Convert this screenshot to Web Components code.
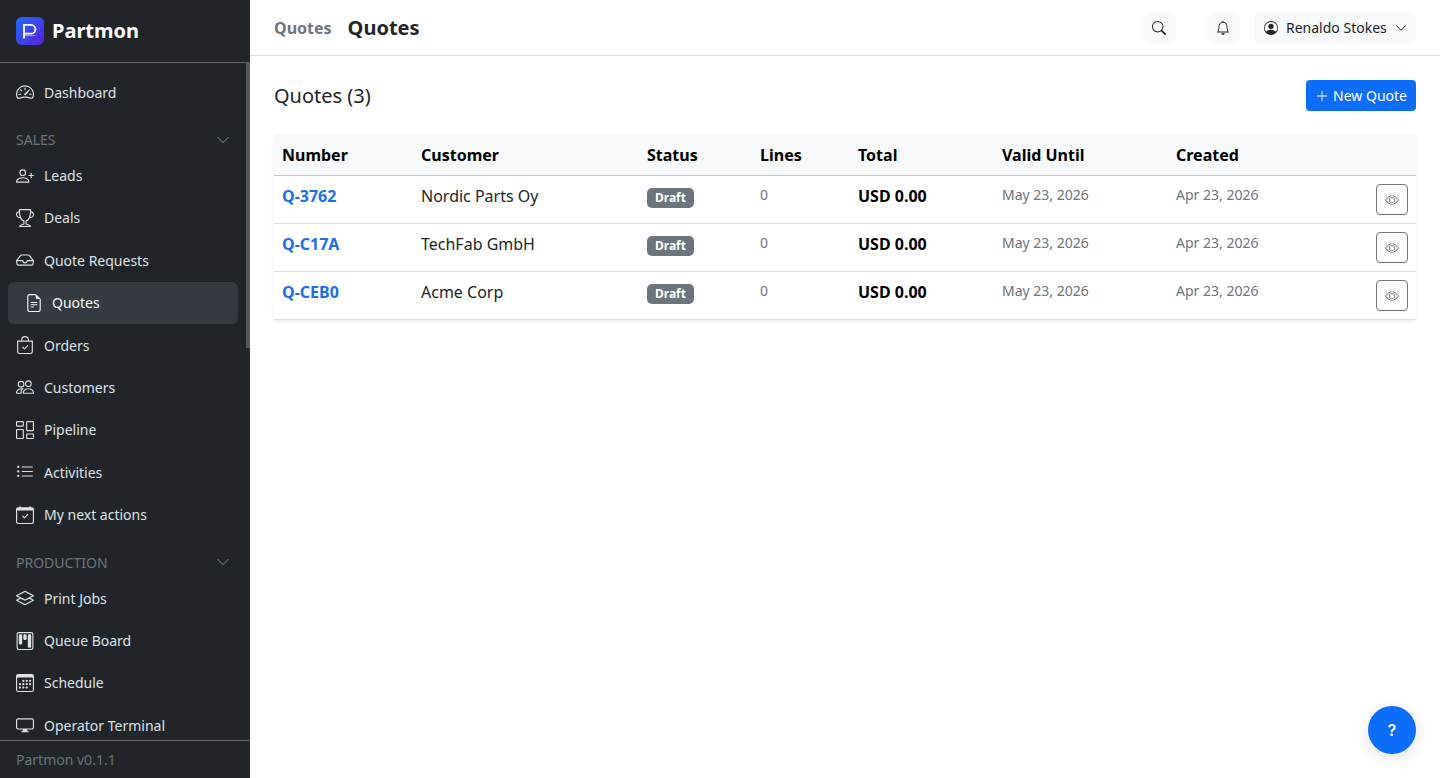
<!DOCTYPE html>
<html lang="en">
<head>
<meta charset="utf-8">
<title>Quotes</title>
<style>
  html, body { height: 100%; }
  body { margin: 0; overflow: hidden; font-family: "Noto Sans", sans-serif; font-size: 16px; color: #212529; background: #fff; }
</style>
</head>
<body>
<app-shell>
  <side-bar slot="side">
    <nav-item icon="speedometer">Dashboard</nav-item>
    <nav-section label="SALES">
      <nav-item icon="personPlus">Leads</nav-item>
      <nav-item icon="trophy">Deals</nav-item>
      <nav-item icon="inbox">Quote Requests</nav-item>
      <nav-item icon="fileText" active>Quotes</nav-item>
      <nav-item icon="bagCheck">Orders</nav-item>
      <nav-item icon="people">Customers</nav-item>
      <nav-item icon="columnsGap">Pipeline</nav-item>
      <nav-item icon="listUl">Activities</nav-item>
      <nav-item icon="calendarCheck">My next actions</nav-item>
    </nav-section>
    <nav-section label="PRODUCTION">
      <nav-item icon="stack">Print Jobs</nav-item>
      <nav-item icon="kanban">Queue Board</nav-item>
      <nav-item icon="calendar3">Schedule</nav-item>
      <nav-item icon="display">Operator Terminal</nav-item>
    </nav-section>
  </side-bar>
  <top-bar slot="top" parent-title="Quotes" page-title="Quotes" user="Renaldo Stokes"></top-bar>
  <quotes-page></quotes-page>
  <help-button slot="float"></help-button>
</app-shell>

<script>
// --- Bootstrap style icons, 16x16 viewBox ---
const ICONS = {
  speedometer: '<path d="M8 4a.5.5 0 0 1 .5.5V6a.5.5 0 0 1-1 0V4.5A.5.5 0 0 1 8 4M3.732 5.732a.5.5 0 0 1 .707 0l.915.914a.5.5 0 1 1-.708.708l-.914-.915a.5.5 0 0 1 0-.707M2 10a.5.5 0 0 1 .5-.5h1.586a.5.5 0 0 1 0 1H2.5A.5.5 0 0 1 2 10m9.5 0a.5.5 0 0 1 .5-.5h1.5a.5.5 0 0 1 0 1H12a.5.5 0 0 1-.5-.5m.754-4.246a.39.39 0 0 0-.527-.02L7.547 9.31a.91.91 0 1 0 1.302 1.258l3.434-4.297a.39.39 0 0 0-.029-.518z"/><path fill-rule="evenodd" d="M0 10a8 8 0 1 1 15.547 2.661c-.442 1.253-1.845 1.602-2.932 1.25C11.309 13.488 9.475 13 8 13c-1.474 0-3.31.488-4.615.911-1.087.352-2.49.003-2.932-1.25A8 8 0 0 1 0 10m8-7a7 7 0 0 0-6.603 9.329c.203.575.923.876 1.68.63C4.397 12.533 6.358 12 8 12s3.604.532 4.923.96c.757.245 1.477-.056 1.68-.631A7 7 0 0 0 8 3"/>',
  personPlus: '<path d="M6 8a3 3 0 1 0 0-6 3 3 0 0 0 0 6m2-3a2 2 0 1 1-4 0 2 2 0 0 1 4 0m4 8c0 1-1 1-1 1H1s-1 0-1-1 1-4 6-4 6 3 6 4m-1-.004c-.001-.246-.154-.986-.832-1.664C9.516 10.68 8.289 10 6 10s-3.516.68-4.168 1.332c-.678.678-.83 1.418-.832 1.664z"/><path fill-rule="evenodd" d="M13.5 5a.5.5 0 0 1 .5.5V7h1.5a.5.5 0 0 1 0 1H14v1.5a.5.5 0 0 1-1 0V8h-1.5a.5.5 0 0 1 0-1H13V5.5a.5.5 0 0 1 .5-.5"/>',
  trophy: '<path d="M2.5.5A.5.5 0 0 1 3 0h10a.5.5 0 0 1 .5.5q0 .807-.034 1.536a3 3 0 1 1-1.133 5.89c-.79 1.865-1.878 2.777-2.833 3.011v2.173l1.425.356c.194.048.377.135.537.255L13.3 15.1a.5.5 0 0 1-.3.9H3a.5.5 0 0 1-.3-.9l1.838-1.379c.16-.12.343-.207.537-.255L6.5 13.11v-2.173c-.955-.234-2.043-1.146-2.833-3.012a3 3 0 1 1-1.132-5.89A33 33 0 0 1 2.5.5m.099 2.54a2 2 0 0 0 .72 3.935c-.333-1.05-.588-2.346-.72-3.935m10.083 3.935a2 2 0 0 0 .72-3.935c-.133 1.59-.388 2.885-.72 3.935M3.504 1q.01.775.056 1.469c.13 2.028.457 3.546.87 4.667C5.294 9.48 6.484 10 7 10a.5.5 0 0 1 .5.5v2.61a1 1 0 0 1-.757.97l-1.426.356a.5.5 0 0 0-.179.085L4.5 15h7l-.638-.479a.5.5 0 0 0-.18-.085l-1.425-.356a1 1 0 0 1-.757-.97V10.5A.5.5 0 0 1 9 10c.516 0 1.706-.52 2.57-2.864.413-1.12.74-2.64.87-4.667q.045-.694.056-1.469z"/>',
  inbox: '<path d="M4.98 4a.5.5 0 0 0-.39.188L1.54 8H6a.5.5 0 0 1 .5.5 1.5 1.5 0 1 0 3 0A.5.5 0 0 1 10 8h4.46l-3.05-3.812A.5.5 0 0 0 11.02 4zm9.954 5H10.45a2.5 2.5 0 0 1-4.9 0H1.066l.32 2.562a.5.5 0 0 0 .497.438h12.234a.5.5 0 0 0 .496-.438zM3.809 3.563A1.5 1.5 0 0 1 4.981 3h6.038a1.5 1.5 0 0 1 1.172.563l3.7 4.625a.5.5 0 0 1 .105.374l-.39 3.124A1.5 1.5 0 0 1 14.117 13H1.883a1.5 1.5 0 0 1-1.489-1.314l-.39-3.124a.5.5 0 0 1 .106-.374z"/>',
  fileText: '<path d="M5.5 7a.5.5 0 0 0 0 1h5a.5.5 0 0 0 0-1zM5 9.5a.5.5 0 0 1 .5-.5h5a.5.5 0 0 1 0 1h-5a.5.5 0 0 1-.5-.5m0 2a.5.5 0 0 1 .5-.5h2a.5.5 0 0 1 0 1h-2a.5.5 0 0 1-.5-.5"/><path d="M9.5 0H4a2 2 0 0 0-2 2v12a2 2 0 0 0 2 2h8a2 2 0 0 0 2-2V4.5zm0 1v2A1.5 1.5 0 0 0 11 4.5h2V14a1 1 0 0 1-1 1H4a1 1 0 0 1-1-1V2a1 1 0 0 1 1-1z"/>',
  bagCheck: '<path fill-rule="evenodd" d="M10.854 8.146a.5.5 0 0 1 0 .708l-3 3a.5.5 0 0 1-.708 0l-1.5-1.5a.5.5 0 0 1 .708-.708L7.5 10.793l2.646-2.647a.5.5 0 0 1 .708 0"/><path d="M8 1a2.5 2.5 0 0 1 2.5 2.5V4h-5v-.5A2.5 2.5 0 0 1 8 1m3.5 3v-.5a3.5 3.5 0 1 0-7 0V4H1v10a2 2 0 0 0 2 2h10a2 2 0 0 0 2-2V4zM2 5h12v9a1 1 0 0 1-1 1H3a1 1 0 0 1-1-1z"/>',
  people: '<path d="M15 14s1 0 1-1-1-4-5-4-5 3-5 4 1 1 1 1zm-7.978-1L7 12.996c.001-.264.167-1.03.76-1.72C8.312 10.629 9.282 10 11 10c1.717 0 2.687.63 3.24 1.276.593.69.758 1.457.76 1.72l-.008.002-.014.002zM11 7a2 2 0 1 0 0-4 2 2 0 0 0 0 4m3-2a3 3 0 1 1-6 0 3 3 0 0 1 6 0M6.936 9.28a6 6 0 0 0-1.23-.247A7 7 0 0 0 5 9c-4 0-5 3-5 4q0 1 1 1h4.216A2.24 2.24 0 0 1 5 13c0-1.01.377-2.042 1.09-2.904.243-.294.526-.569.846-.816M4.92 10A5.5 5.5 0 0 0 4 13H1c0-.26.164-1.03.76-1.724.545-.636 1.492-1.256 3.16-1.275ZM1.5 5.5a3 3 0 1 1 6 0 3 3 0 0 1-6 0m3-2a2 2 0 1 0 0 4 2 2 0 0 0 0-4"/>',
  columnsGap: '<path d="M6 1v3H1V1zM1 0a1 1 0 0 0-1 1v3a1 1 0 0 0 1 1h5a1 1 0 0 0 1-1V1a1 1 0 0 0-1-1zm14 12v3h-5v-3zm-5-1a1 1 0 0 0-1 1v3a1 1 0 0 0 1 1h5a1 1 0 0 0 1-1v-3a1 1 0 0 0-1-1zM6 8v7H1V8zM1 7a1 1 0 0 0-1 1v7a1 1 0 0 0 1 1h5a1 1 0 0 0 1-1V8a1 1 0 0 0-1-1zm14-6v7h-5V1zm-5-1a1 1 0 0 0-1 1v7a1 1 0 0 0 1 1h5a1 1 0 0 0 1-1V1a1 1 0 0 0-1-1z"/>',
  listUl: '<path fill-rule="evenodd" d="M5 11.5a.5.5 0 0 1 .5-.5h9a.5.5 0 0 1 0 1h-9a.5.5 0 0 1-.5-.5m0-4a.5.5 0 0 1 .5-.5h9a.5.5 0 0 1 0 1h-9a.5.5 0 0 1-.5-.5m0-4a.5.5 0 0 1 .5-.5h9a.5.5 0 0 1 0 1h-9a.5.5 0 0 1-.5-.5m-3 1a1 1 0 1 0 0-2 1 1 0 0 0 0 2m0 4a1 1 0 1 0 0-2 1 1 0 0 0 0 2m0 4a1 1 0 1 0 0-2 1 1 0 0 0 0 2"/>',
  calendarCheck: '<path d="M10.854 7.146a.5.5 0 0 1 0 .708l-3 3a.5.5 0 0 1-.708 0l-1.5-1.5a.5.5 0 1 1 .708-.708L7.5 9.793l2.646-2.647a.5.5 0 0 1 .708 0"/><path d="M3.5 0a.5.5 0 0 1 .5.5V1h8V.5a.5.5 0 0 1 1 0V1h1a2 2 0 0 1 2 2v11a2 2 0 0 1-2 2H2a2 2 0 0 1-2-2V3a2 2 0 0 1 2-2h1V.5a.5.5 0 0 1 .5-.5M1 4v10a1 1 0 0 0 1 1h12a1 1 0 0 0 1-1V4z"/>',
  stack: '<path d="M8.235 1.559a.5.5 0 0 0-.47 0l-7.5 4a.5.5 0 0 0 0 .882L3.188 8 .264 9.559a.5.5 0 0 0 0 .882l7.5 4a.5.5 0 0 0 .47 0l7.5-4a.5.5 0 0 0 0-.882L12.813 8l2.922-1.559a.5.5 0 0 0 0-.882zm3.515 7.008L14.438 10 8 13.433 1.562 10 4.25 8.567l3.515 1.874a.5.5 0 0 0 .47 0zM8 9.433 1.562 6 8 2.567 14.438 6z"/>',
  kanban: '<path d="M13.5 1a1 1 0 0 1 1 1v12a1 1 0 0 1-1 1h-11a1 1 0 0 1-1-1V2a1 1 0 0 1 1-1zm-11-1a2 2 0 0 0-2 2v12a2 2 0 0 0 2 2h11a2 2 0 0 0 2-2V2a2 2 0 0 0-2-2z"/><path d="M6.5 3a1 1 0 0 1 1-1h1a1 1 0 0 1 1 1v3a1 1 0 0 1-1 1h-1a1 1 0 0 1-1-1zm-4 0a1 1 0 0 1 1-1h1a1 1 0 0 1 1 1v7a1 1 0 0 1-1 1h-1a1 1 0 0 1-1-1zm8 0a1 1 0 0 1 1-1h1a1 1 0 0 1 1 1v10a1 1 0 0 1-1 1h-1a1 1 0 0 1-1-1z"/>',
  calendar3: '<path d="M14 0H2a2 2 0 0 0-2 2v12a2 2 0 0 0 2 2h12a2 2 0 0 0 2-2V2a2 2 0 0 0-2-2M1 3.857C1 3.384 1.448 3 2 3h12c.552 0 1 .384 1 .857v10.286c0 .473-.448.857-1 .857H2c-.552 0-1-.384-1-.857z"/><path d="M6.5 7a1 1 0 1 0 0-2 1 1 0 0 0 0 2m3 0a1 1 0 1 0 0-2 1 1 0 0 0 0 2m3 0a1 1 0 1 0 0-2 1 1 0 0 0 0 2m-9 3a1 1 0 1 0 0-2 1 1 0 0 0 0 2m3 0a1 1 0 1 0 0-2 1 1 0 0 0 0 2m3 0a1 1 0 1 0 0-2 1 1 0 0 0 0 2m3 0a1 1 0 1 0 0-2 1 1 0 0 0 0 2m-9 3a1 1 0 1 0 0-2 1 1 0 0 0 0 2m3 0a1 1 0 1 0 0-2 1 1 0 0 0 0 2m3 0a1 1 0 1 0 0-2 1 1 0 0 0 0 2"/>',
  display: '<path d="M0 4s0-2 2-2h12s2 0 2 2v6s0 2-2 2h-4q0 1 .25 1.5H11a.5.5 0 0 1 0 1H5a.5.5 0 0 1 0-1h.75Q6 13 6 12H2s-2 0-2-2zm1.398-.855a.76.76 0 0 0-.254.302A1.5 1.5 0 0 0 1 4.01V10c0 .325.078.502.145.602q.105.156.302.254a1.5 1.5 0 0 0 .538.143L2.01 11H14c.325 0 .502-.078.602-.145a.76.76 0 0 0 .254-.302 1.5 1.5 0 0 0 .143-.538L15 9.99V4c0-.325-.078-.502-.145-.602a.76.76 0 0 0-.302-.254A1.5 1.5 0 0 0 13.99 3H2c-.325 0-.502.078-.602.145"/>',
  chevronDown: '<path fill-rule="evenodd" d="M1.646 4.646a.5.5 0 0 1 .708 0L8 10.293l5.646-5.647a.5.5 0 0 1 .708.708l-6 6a.5.5 0 0 1-.708 0l-6-6a.5.5 0 0 1 0-.708"/>',
  search: '<path d="M11.742 10.344a6.5 6.5 0 1 0-1.397 1.398h-.001q.044.06.098.115l3.85 3.85a1 1 0 0 0 1.415-1.414l-3.85-3.85a1 1 0 0 0-.115-.1zM12 6.5a5.5 5.5 0 1 1-11 0 5.5 5.5 0 0 1 11 0"/>',
  bell: '<path d="M8 16a2 2 0 0 0 2-2H6a2 2 0 0 0 2 2M8 1.918l-.797.161A4 4 0 0 0 4 6c0 .628-.134 2.197-.459 3.742-.16.767-.376 1.566-.663 2.258h10.244c-.287-.692-.502-1.49-.663-2.258C12.134 8.197 12 6.628 12 6a4 4 0 0 0-3.203-3.92zM14.22 12c.223.447.481.801.78 1H1c.299-.199.557-.553.78-1C2.68 10.2 3 6.88 3 6c0-2.42 1.72-4.44 4.005-4.901a1 1 0 1 1 1.99 0A5 5 0 0 1 13 6c0 .88.32 4.2 1.22 6"/>',
  personCircle: '<path d="M11 6a3 3 0 1 1-6 0 3 3 0 0 1 6 0"/><path fill-rule="evenodd" d="M0 8a8 8 0 1 1 16 0A8 8 0 0 1 0 8m8-7a7 7 0 0 0-5.468 11.37C3.242 11.226 4.805 10 8 10s4.757 1.225 5.468 2.37A7 7 0 0 0 8 1"/>',
  eye: '<path d="M16 8s-3-5.5-8-5.5S0 8 0 8s3 5.5 8 5.5S16 8 16 8M1.173 8a13 13 0 0 1 1.66-2.043C4.12 4.668 5.88 3.5 8 3.5s3.879 1.168 5.168 2.457A13 13 0 0 1 14.828 8q-.086.13-.195.288c-.335.48-.83 1.12-1.465 1.755C11.879 11.332 10.119 12.5 8 12.5s-3.879-1.168-5.168-2.457A13 13 0 0 1 1.172 8z"/><path d="M8 5.5a2.5 2.5 0 1 0 0 5 2.5 2.5 0 0 0 0-5M4.5 8a3.5 3.5 0 1 1 7 0 3.5 3.5 0 0 1-7 0"/>',
  plusLg: '<path fill-rule="evenodd" d="M8 2a.5.5 0 0 1 .5.5v5h5a.5.5 0 0 1 0 1h-5v5a.5.5 0 0 1-1 0v-5h-5a.5.5 0 0 1 0-1h5v-5A.5.5 0 0 1 8 2"/>'
};

function icon(name, size) {
  return `<svg xmlns="http://www.w3.org/2000/svg" width="${size}" height="${size}" viewBox="0 0 16 16" fill="currentColor" aria-hidden="true">${ICONS[name]}</svg>`;
}

// --- Page frame ---
class AppShell extends HTMLElement {
  constructor() {
    super();
    this.attachShadow({ mode: 'open' });
    this.shadowRoot.innerHTML = `
      <style>
        :host { display: flex; height: 100vh; }
        .main { flex: 1; min-width: 0; display: flex; flex-direction: column; }
      </style>
      <slot name="side"></slot>
      <div class="main">
        <slot name="top"></slot>
        <slot></slot>
      </div>
      <slot name="float"></slot>
    `;
  }
}
customElements.define('app-shell', AppShell);

// --- Sidebar ---
class SideBar extends HTMLElement {
  constructor() {
    super();
    this.attachShadow({ mode: 'open' });
    this.shadowRoot.innerHTML = `
      <style>
        :host { display: flex; flex-direction: column; flex: none; width: 250px; height: 100%; background: #212529; color: #fff; position: relative; }
        .brand { flex: none; height: 63px; box-sizing: border-box; display: flex; align-items: center; gap: 8px; padding: 0 16px; border-bottom: 1px solid rgba(255,255,255,.3); }
        .brand span { font-size: 20px; font-weight: 700; position: relative; top: -1px; }
        .brand svg { display: block; }
        .nav { flex: 1; min-height: 0; overflow: hidden; padding-top: 8px; }
        .thumb { position: absolute; top: 63px; right: 0; width: 4px; height: 285px; background: #54585c; }
        .foot { flex: none; height: 38px; box-sizing: border-box; border-top: 1px solid rgba(255,255,255,.3); padding: 0 16px; display: flex; align-items: center; font-size: 14px; color: #6c757d; }
      </style>
      <div class="brand">
        <svg width="28" height="28" viewBox="0 0 28 28" role="img" aria-label="Partmon logo">
          <defs><linearGradient id="g" x1="0" y1="0" x2="1" y2="1"><stop offset="0" stop-color="#1f6bff"/><stop offset="1" stop-color="#5a1fd8"/></linearGradient></defs>
          <rect width="28" height="28" rx="6" fill="url(#g)"/>
          <path d="M8 21.5V7.8h7a4.4 4.4 0 0 1 0 8.8H8" fill="none" stroke="#fff" stroke-width="1.8"/>
          <path d="M9 18.6h10" stroke="#fff" stroke-opacity=".55" stroke-width="1"/>
        </svg>
        <span>Partmon</span>
      </div>
      <div class="nav"><slot></slot></div>
      <div class="thumb"></div>
      <div class="foot">Partmon v0.1.1</div>
    `;
  }
}
customElements.define('side-bar', SideBar);

class NavSection extends HTMLElement {
  constructor() {
    super();
    this.attachShadow({ mode: 'open' });
  }

  connectedCallback() {
    this.shadowRoot.innerHTML = `
      <style>
        :host { display: block; }
        .head { display: flex; align-items: center; justify-content: space-between; height: 21px; padding: 0 20px 0 16px; margin: 16px 0 4px; font-size: 14px; color: #6c757d; }
        :host(:last-child) .head { margin-bottom: 4.3px; }
        .head svg { display: block; }
      </style>
      <div class="head"><span>${this.getAttribute('label')}</span>${icon('chevronDown', 14)}</div>
      <slot></slot>
    `;
  }
}
customElements.define('nav-section', NavSection);

class NavItem extends HTMLElement {
  constructor() {
    super();
    this.attachShadow({ mode: 'open' });
  }

  connectedCallback() {
    this.shadowRoot.innerHTML = `
      <style>
        :host { display: block; margin: 0 12px 0 8px; }
        a { display: flex; align-items: center; gap: 10px; height: 42.375px; box-sizing: border-box; padding: 0 8px; border-radius: 6px; font-size: 14px; color: #dee2e6; }
        svg { display: block; flex: none; }
        :host([active]) a { background: #343a40; color: #f8f9fa; padding-left: 17px; gap: 9px; }
      </style>
      <a>${icon(this.getAttribute('icon'), 18)}<slot></slot></a>
    `;
  }
}
customElements.define('nav-item', NavItem);

// --- Top bar ---
class TopBar extends HTMLElement {
  constructor() {
    super();
    this.attachShadow({ mode: 'open' });
  }

  connectedCallback() {
    this.shadowRoot.innerHTML = `
      <style>
        :host { display: flex; flex: none; height: 56px; box-sizing: border-box; align-items: center; padding: 0 24px; border-bottom: 1px solid #dee2e6; background: #fff; }
        .parent { font-size: 16px; font-weight: 700; color: #6c757d; margin-right: 16px; }
        .title { font-size: 20px; font-weight: 700; color: #212529; }
        .tools { margin-left: auto; display: flex; align-items: center; gap: 14px; padding-top: 1px; }
        .btn { display: flex; align-items: center; justify-content: center; height: 32px; box-sizing: border-box; background: #f8f9fa; border-radius: 8px; color: #212529; }
        .btn svg { display: block; }
        .square { width: 33px; padding-right: 1px; }
        .gap { margin-left: 17px; }
        .user { width: 162px; justify-content: flex-start; padding-left: 10px; gap: 8px; font-size: 14px; }
        .user span { margin-bottom: 1px; }
      </style>
      <span class="parent">${this.getAttribute('parent-title')}</span>
      <span class="title">${this.getAttribute('page-title')}</span>
      <div class="tools">
        <div class="btn square">${icon('search', 14)}</div>
        <div class="btn square gap">${icon('bell', 14)}</div>
        <div class="btn user">${icon('personCircle', 14)}<span>${this.getAttribute('user')}</span>${icon('chevronDown', 12)}</div>
      </div>
    `;
  }
}
customElements.define('top-bar', TopBar);

// --- Quotes page ---
const QUOTES = [
  { number: 'Q-3762', customer: 'Nordic Parts Oy', status: 'Draft', lines: 0, total: 'USD 0.00', valid: 'May 23, 2026', created: 'Apr 23, 2026' },
  { number: 'Q-C17A', customer: 'TechFab GmbH', status: 'Draft', lines: 0, total: 'USD 0.00', valid: 'May 23, 2026', created: 'Apr 23, 2026' },
  { number: 'Q-CEB0', customer: 'Acme Corp', status: 'Draft', lines: 0, total: 'USD 0.00', valid: 'May 23, 2026', created: 'Apr 23, 2026' }
];

class QuotesPage extends HTMLElement {
  constructor() {
    super();
    this.attachShadow({ mode: 'open' });
  }

  connectedCallback() {
    const rows = QUOTES.map(q => `
      <tr>
        <td><a class="num">${q.number}</a></td>
        <td>${q.customer}</td>
        <td><span class="badge">${q.status}</span></td>
        <td class="muted">${q.lines}</td>
        <td class="total">${q.total}</td>
        <td class="muted">${q.valid}</td>
        <td class="muted">${q.created}</td>
        <td class="act"><span class="view">${icon('eye', 14)}</span></td>
      </tr>`).join('');

    this.shadowRoot.innerHTML = `
      <style>
        :host { display: block; flex: 1; min-height: 0; padding: 24px; }
        .head { display: flex; align-items: center; justify-content: space-between; margin-bottom: 23px; height: 31px; }
        h1 { margin: 0; font-size: 20px; font-weight: 400; color: #212529; }
        .new { display: flex; align-items: center; gap: 4px; height: 31px; box-sizing: border-box; padding: 0 9px; background: #0d6efd; color: #fff; border-radius: 4px; font-size: 14px; }
        .new svg { display: block; }
        .card { border-radius: 4px; box-shadow: 0 2px 4px rgba(0,0,0,.075); background: #fff; }
        table { width: 100%; border-collapse: collapse; table-layout: fixed; }
        th { text-align: left; font-size: 16px; font-weight: 700; color: #000; background: #f8f9fa; height: 41px; padding: 0 8px; border-bottom: 1px solid #c4c8cc; }
        th:first-child { border-top-left-radius: 4px; }
        th:last-child { border-top-right-radius: 4px; }
        td { height: 48px; box-sizing: border-box; padding: 8px; vertical-align: top; font-size: 16px; line-height: 24px; color: #212529; border-bottom: 1px solid #dee2e6; }
        .num { color: #1a6fe8; font-weight: 700; }
        .total { font-weight: 700; color: #000; }
        .muted { font-size: 14px; line-height: 21px; color: #6c757d; }
        .badge { display: inline-block; background: #6c757d; color: #fff; font-size: 12px; font-weight: 700; line-height: 12px; padding: 4px 8px; border-radius: 5px; vertical-align: 1px; margin-top: 4px; }
        .act { text-align: right; }
        .view { display: inline-flex; align-items: center; justify-content: center; width: 32px; height: 31px; box-sizing: border-box; border: 1px solid #6c757d; border-radius: 4px; color: #6c757d; }
      </style>
      <div class="head">
        <h1>Quotes (3)</h1>
        <div class="new">${icon('plusLg', 14)}<span>New Quote</span></div>
      </div>
      <div class="card">
        <table>
          <colgroup><col style="width:139px"><col style="width:226px"><col style="width:113px"><col style="width:98px"><col style="width:144px"><col style="width:174px"><col style="width:160px"><col></colgroup>
          <thead><tr><th>Number</th><th>Customer</th><th>Status</th><th>Lines</th><th>Total</th><th>Valid Until</th><th>Created</th><th></th></tr></thead>
          <tbody>${rows}</tbody>
        </table>
      </div>
    `;
  }
}
customElements.define('quotes-page', QuotesPage);

// --- Floating help ---
class HelpButton extends HTMLElement {
  constructor() {
    super();
    this.attachShadow({ mode: 'open' });
    this.shadowRoot.innerHTML = `
      <style>
        :host { position: fixed; right: 24px; bottom: 24px; width: 48px; height: 48px; border-radius: 50%; background: #0d6efd; color: #fff; display: flex; align-items: center; justify-content: center; font-family: Inter, sans-serif; font-weight: 600; font-size: 16px; box-shadow: 0 4px 16px rgba(0,0,0,.12); }
      </style>
      ?
    `;
  }
}
customElements.define('help-button', HelpButton);
</script>
</body>
</html>
